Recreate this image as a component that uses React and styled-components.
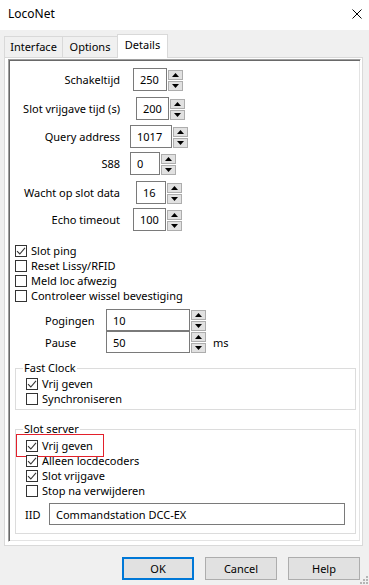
import React from 'react';
import styled, { createGlobalStyle } from 'styled-components';

const Global = createGlobalStyle`
  html, body { margin: 0; padding: 0; background: #f0f0f0; }
  body { font-family: "Noto Sans", "Segoe UI", sans-serif; font-size: 11px; color: #000; }
  * { box-sizing: border-box; }
`;

const Window = styled.div`
  position: relative;
  width: 369px;
  height: 585px;
  background: #f0f0f0;
  display: flex;
  flex-direction: column;
  overflow: hidden;
`;

const TitleBar = styled.div`
  height: 30px;
  flex: none;
  background: #fff;
  display: flex;
  align-items: center;
  justify-content: space-between;
  padding: 0 7px 2px 8px;
`;

const Title = styled.span`
  font-size: 12px;
  line-height: 16px;
`;

const TabStrip = styled.div`
  margin-top: 4px;
  height: 23px;
  flex: none;
  display: flex;
  align-items: flex-end;
  padding-left: 4px;
  position: relative;
  z-index: 1;
`;

const Tab = styled.div`
  width: ${p => p.$w}px;
  height: ${p => (p.$active ? 24 : 21)}px;
  margin-left: ${p => (p.$first ? 0 : -1)}px;
  margin-bottom: ${p => (p.$active ? -1 : 0)}px;
  border: 1px solid #d9d9d9;
  border-bottom: none;
  background: ${p => (p.$active ? '#fff' : '#f0f0f0')};
  text-align: center;
  padding-top: 2px;
  line-height: 15px;
  font-size: 11px;
`;

const TabPage = styled.div`
  height: 489px;
  flex: none;
  margin: 0 6px 0 4px;
  border: 1px solid #d9d9d9;
  background: #fff;
  padding: 1px 1px 3px 3px;
  display: flex;
  flex-direction: column;
`;

const ScrollBox = styled.div`
  flex: 1;
  border: 1px solid;
  border-color: #a0a0a0 #fff #fff #a0a0a0;
  box-shadow: inset 1px 1px 0 #696969, inset -1px -1px 0 #e3e3e3;
  padding: 1px;
  display: flex;
  flex-direction: column;
`;

const FormRow = styled.div`
  display: flex;
  align-items: flex-start;
  height: ${p => p.$h || 23}px;
  margin-top: ${p => p.$top || 0}px;
  margin-left: ${p => p.$ml || 0}px;
  flex: none;
`;

const FieldLabel = styled.span`
  width: ${p => p.$w}px;
  flex: none;
  align-self: center;
  text-align: ${p => p.$align || 'right'};
  white-space: nowrap;
  line-height: 15px;
`;

const Edit = styled.div`
  width: ${p => p.$w}px;
  height: 100%;
  margin-left: ${p => p.$ml || 0}px;
  flex: none;
  border: 1px solid #7a7a7a;
  background: #fff;
  display: flex;
  align-items: center;
  padding-left: 6px;
  line-height: 15px;
  white-space: nowrap;
`;

const SpinButtons = styled.div`
  display: flex;
  flex-direction: column;
  gap: 1px;
  margin: ${p => p.$mt || 2}px 0 0 1px;
  flex: none;
`;

const SpinBtn = styled.div`
  width: 15px;
  height: 10px;
  border: 1px solid #adadad;
  background: #e1e1e1;
  display: flex;
  align-items: center;
  justify-content: center;
`;

const Unit = styled.span`
  align-self: center;
  margin-left: 7px;
  line-height: 15px;
`;

const CheckRow = styled.div`
  position: relative;
  display: flex;
  align-items: center;
  height: 15px;
  flex: none;
  margin-left: ${p => p.$ml || 0}px;
  margin-top: ${p => p.$top || 0}px;
  white-space: nowrap;
`;

const Box = styled.span`
  width: 12px;
  height: 12px;
  flex: none;
  border: 1px solid #333;
  background: #fff;
  margin-right: 4px;
  display: flex;
  align-items: center;
  justify-content: center;
`;

const Highlight = styled.span`
  position: absolute;
  left: -10px;
  top: -4px;
  width: 88px;
  height: 23px;
  border: 1px solid #e3202b;
  pointer-events: none;
`;

const Group = styled.fieldset`
  margin: ${p => p.$top}px 3px 0 5px;
  border: 1px solid #dcdcdc;
  padding: 0 8px ${p => p.$pb}px 7px;
  min-width: 0;
  flex: none;
`;

const Legend = styled.legend`
  padding: 0 1px;
  line-height: 16px;
  font-size: 11px;
`;

const ButtonRow = styled.div`
  display: flex;
  justify-content: flex-end;
  gap: 11px;
  margin-top: 11px;
  padding-right: 9px;
  flex: none;
`;

const Button = styled.button`
  width: 72px;
  height: 23px;
  font-family: inherit;
  font-size: 11px;
  color: #000;
  background: #e1e1e1;
  border: ${p => (p.$default ? '2px solid #0078d7' : '1px solid #adadad')};
  padding: 0;
  line-height: 15px;
`;

const Grip = styled.svg`
  position: absolute;
  right: 1px;
  bottom: 1px;
`;

const Arrow = ({ up }) => (
  <svg width="7" height="4" viewBox="0 0 7 4">
    <path d={up ? 'M0 4 L3.5 0 L7 4 Z' : 'M0 0 L7 0 L3.5 4 Z'} fill="#000" />
  </svg>
);

const Spin = ({ value, w, ml, mt }) => (
  <>
    <Edit $w={w} $ml={ml}>{value}</Edit>
    <SpinButtons $mt={mt}>
      <SpinBtn><Arrow up /></SpinBtn>
      <SpinBtn><Arrow /></SpinBtn>
    </SpinButtons>
  </>
);

const Check = ({ checked, label, ml, top, highlight }) => (
  <CheckRow $ml={ml} $top={top}>
    {highlight && <Highlight />}
    <Box>
      {checked && (
        <svg width="10" height="10" viewBox="0 0 10 10">
          <path d="M1 5.2 L3.8 8 L9 1.8" fill="none" stroke="#333" strokeWidth="1.1" />
        </svg>
      )}
    </Box>
    {label}
  </CheckRow>
);

const fields = [
  { label: 'Schakeltijd', value: '250', top: 7, x: 133, w: 34 },
  { label: 'Slot vrijgave tijd (s)', value: '200', top: 6, x: 136, w: 33 },
  { label: 'Query address', value: '1017', top: 5, x: 130, w: 42 },
  { label: 'S88', value: '0', top: 4, x: 130, w: 30 },
  { label: 'Wacht op slot data', value: '16', top: 6, x: 136, w: 30 },
  { label: 'Echo timeout', value: '100', top: 4, x: 133, w: 33 },
];

export default function App() {
  return (
    <>
      <Global />
      <Window>
        <TitleBar>
          <Title>LocoNet</Title>
          <svg width="10" height="10" viewBox="0 0 10 10">
            <path d="M0.5 0.5 L9.5 9.5 M9.5 0.5 L0.5 9.5" stroke="#000" strokeWidth="1" />
          </svg>
        </TitleBar>
        <TabStrip>
          <Tab $w={59} $first>Interface</Tab>
          <Tab $w={56}>Options</Tab>
          <Tab $w={51} $active>Details</Tab>
        </TabStrip>
        <TabPage>
          <ScrollBox>
            {fields.map(f => (
              <FormRow key={f.label} $top={f.top}>
                <FieldLabel $w={110}>{f.label}</FieldLabel>
                <Spin value={f.value} w={f.w} ml={f.x - 120} />
              </FormRow>
            ))}
            <Check checked label="Slot ping" ml={5} top={12} />
            <Check label="Reset Lissy/RFID" ml={5} />
            <Check label="Meld loc afwezig" ml={5} />
            <Check label="Controleer wissel bevestiging" ml={5} />
            <FormRow $top={6} $h={22} $ml={35}>
              <FieldLabel $w={61} $align="left">Pogingen</FieldLabel>
              <Spin value="10" w={84} mt={1} />
            </FormRow>
            <FormRow $h={22} $ml={35}>
              <FieldLabel $w={61} $align="left">Pause</FieldLabel>
              <Spin value="50" w={84} mt={1} />
              <Unit>ms</Unit>
            </FormRow>
            <Group $top={7} $pb={3}>
              <Legend>Fast Clock</Legend>
              <Check checked label="Vrij geven" ml={3} />
              <Check label="Synchroniseren" ml={3} />
            </Group>
            <Group $top={11} $pb={8}>
              <Legend>Slot server</Legend>
              <Check checked label="Vrij geven" ml={3} top={1} highlight />
              <Check checked label="Alleen locdecoders" ml={3} />
              <Check checked label="Slot vrijgave" ml={3} />
              <Check label="Stop na verwijderen" ml={3} />
              <FormRow $top={5} $h={22} $ml={2}>
                <FieldLabel $w={24} $align="left">IID</FieldLabel>
                <Edit $w={296}>Commandstation DCC-EX</Edit>
              </FormRow>
            </Group>
          </ScrollBox>
        </TabPage>
        <ButtonRow>
          <Button $default>OK</Button>
          <Button>Cancel</Button>
          <Button>Help</Button>
        </ButtonRow>
        <Grip width="8" height="8" viewBox="0 0 8 8">
          <g fill="#b5b5b5">
            <rect x="6" y="0" width="2" height="2" />
            <rect x="3" y="3" width="2" height="2" />
            <rect x="6" y="3" width="2" height="2" />
            <rect x="0" y="6" width="2" height="2" />
            <rect x="3" y="6" width="2" height="2" />
            <rect x="6" y="6" width="2" height="2" />
          </g>
        </Grip>
      </Window>
    </>
  );
}
